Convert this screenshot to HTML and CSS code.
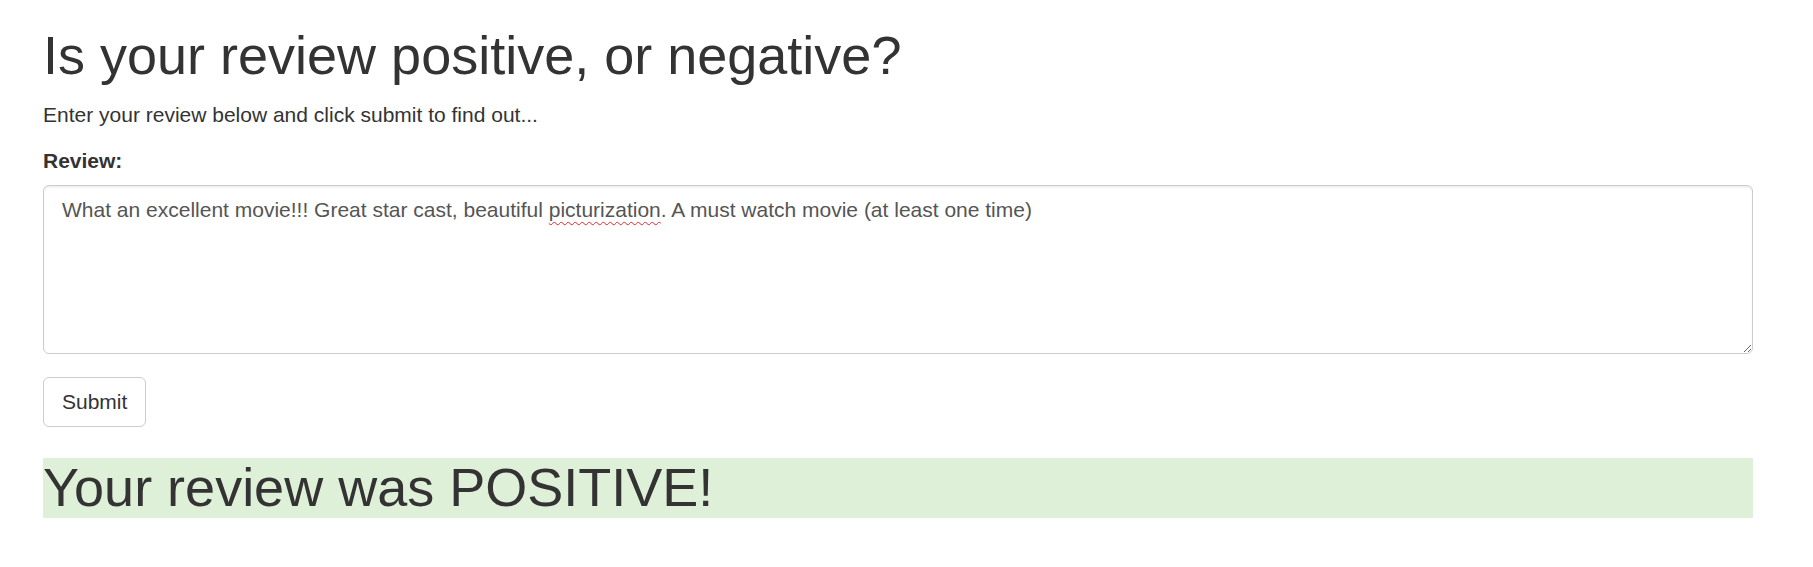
FILE: index.html
```html
<!DOCTYPE html>
<html lang="en">
<head>
<meta charset="utf-8">
<title>Sentiment</title>
<link rel="stylesheet" href="styles.css">
</head>
<body>
<div class="container">
  <h1 class="title">Is your review positive, or negative?</h1>
  <p class="lead-text">Enter your review below and click submit to find out...</p>
  <form class="review-form" onsubmit="return false;">
    <div class="form-group">
      <label class="field-label" for="review">Review:</label>
      <div class="form-control review-box" id="review" role="textbox" aria-multiline="true">What an excellent movie!!! Great star cast, beautiful <span class="misspelled">picturization</span>. A must watch movie (at least one time)</div>
    </div>
    <button type="submit" class="btn">Submit</button>
  </form>
  <h1 class="result">Your review was POSITIVE!</h1>
</div>
</body>
</html>
```

FILE: styles.css
```css
* {
  box-sizing: border-box;
}

html, body {
  margin: 0;
  padding: 0;
  background: #fff;
}

body {
  font-family: "Liberation Sans", Arial, Helvetica, sans-serif;
  font-size: 21px;
  line-height: 30px;
  color: #333;
}

.container {
  padding: 0 60px 0 43px;
}

.title,
.result {
  font-size: 54px;
  font-weight: 500;
  line-height: 59.4px;
  margin: 26px 0 15px 0;
}

.lead-text {
  margin: 0 0 16px 0;
}

.review-form {
  margin: 0;
}

.form-group {
  margin-bottom: 23px;
}

.field-label {
  display: inline-block;
  font-weight: bold;
  margin-bottom: 9px;
}

.form-control {
  display: block;
  width: 100%;
  height: 169px;
  padding: 9px 18px;
  font-size: 21px;
  line-height: 30px;
  color: #555;
  background: #fff;
  border: 1.5px solid #ccc;
  border-radius: 6px;
  box-shadow: inset 0 1.5px 1.5px rgba(0, 0, 0, 0.075);
  overflow: auto;
  resize: both;
  white-space: pre-wrap;
}

.misspelled {
  text-decoration: underline wavy #e0262b;
  text-decoration-thickness: 1px;
  text-underline-offset: 4px;
}

.btn {
  display: inline-block;
  font-family: inherit;
  font-size: 21px;
  line-height: 30px;
  padding: 9px 18px;
  color: #333;
  background: #fff;
  border: 1.5px solid #ccc;
  border-radius: 6px;
  cursor: pointer;
}

.result {
  margin-top: 31px;
  background: #dff0d8;
}
```
